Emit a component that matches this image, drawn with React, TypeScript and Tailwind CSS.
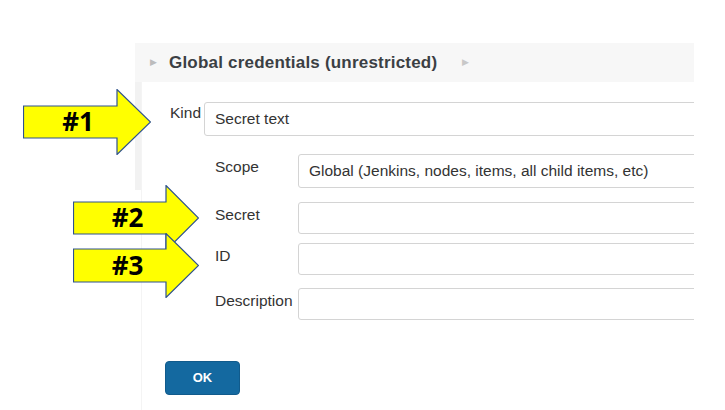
import React from 'react';

const font = { fontFamily: '"Liberation Sans", Arial, sans-serif' };

// Yellow callout arrow, drawn on top of the form
const Callout: React.FC<{ label: string; x: number; y: number; w: number; bodyH: number; headH: number; headW: number }> = ({
  label,
  x,
  y,
  w,
  bodyH,
  headH,
  headW,
}) => {
  const top = (headH - bodyH) / 2;
  const base = w - headW;
  const pts = `0.5,${top} ${base},${top} ${base},0.5 ${w - 0.5},${headH / 2} ${base},${headH - 0.5} ${base},${top + bodyH} 0.5,${top + bodyH}`;
  return (
    <svg className="absolute" style={{ left: x, top: y }} width={w} height={headH} viewBox={`0 0 ${w} ${headH}`}>
      <polygon points={pts} fill="#ffff00" stroke="#2f528f" strokeWidth="1.2" />
      <text
        x={base / 2 + 8}
        y={headH / 2 + 9}
        textAnchor="middle"
        fontSize="26"
        fontWeight="700"
        fontFamily='"Open Sans", "Liberation Sans", sans-serif'
        fill="#000"
      >
        {label}
      </text>
    </svg>
  );
};

const Field: React.FC<{ label: string; value?: string; h?: string; className?: string }> = ({ label, value, h = 'h-[33px]', className }) => (
  <div className={`flex items-start ${className ?? ''}`}>
    <div className="w-[83px] shrink-0 pt-[3px] text-[15.5px] leading-[20px] text-[#333]">{label}</div>
    <div
      className={`flex-1 -mr-[12px] ${h} border border-[#d4d4d4] rounded-[3px] bg-white flex items-center pl-[10px] text-[15.5px] text-[#333] whitespace-nowrap`}
    >
      {value}
    </div>
  </div>
);

export default function App() {
  return (
    <div className="relative w-[725px] h-[410px] overflow-hidden bg-white" style={font}>
      <div className="ml-[135px] w-[559px] pt-[43px] h-full flex flex-col overflow-hidden">
        {/* Section header */}
        <div className="h-[39px] bg-[#f7f7f7] flex items-center shrink-0">
          <span className="ml-[15px] text-[9px] text-[#bcbcbc]">▶</span>
          <span className="ml-[12px] text-[17px] font-bold text-[#3b3f44] tracking-[0.2px]">Global credentials (unrestricted)</span>
          <span className="ml-[25px] text-[9px] text-[#c8c8c8]">▶</span>
        </div>

        <div className="flex flex-1">
          <div className="w-[6px] shrink-0">
            <div className="h-[108px] bg-[#f2f2f2]" />
          </div>
          <div className="flex-1 border-l border-[#f4f4f4] pl-[28px] pt-[20px]">
            {/* Kind */}
            <div className="flex items-start">
              <div className="w-[34px] shrink-0 pt-[1px] text-[15.5px] leading-[20px] text-[#333]">Kind</div>
              <div className="flex-1 -mr-[12px] h-[34px] border border-[#d4d4d4] rounded-[3px] flex items-center pl-[10px] text-[15.5px] text-[#333]">
                Secret text
              </div>
            </div>

            <div className="ml-[45px] mt-[18px] flex flex-col">
              <Field label="Scope" value="Global (Jenkins, nodes, items, all child items, etc)" h="h-[34px]" />
              <Field label="Secret" className="mt-[14px]" h="h-[32px]" />
              <Field label="ID" className="mt-[9px]" h="h-[32px]" />
              <Field label="Description" className="mt-[13px]" h="h-[32px]" />
            </div>

            <button className="mt-[41px] ml-[-5px] w-[75px] h-[34px] rounded-[4px] bg-[#1469a0] text-white text-[13px] font-bold border border-[#115b8c]">
              OK
            </button>
          </div>
        </div>
      </div>

      <Callout label="#1" x={23} y={89} w={128} bodyH={32} headH={66} headW={34} />
      <Callout label="#2" x={73} y={185} w={126} bodyH={32} headH={66} headW={33} />
      <Callout label="#3" x={73} y={233} w={126} bodyH={33} headH={65} headW={33} />
    </div>
  );
}
